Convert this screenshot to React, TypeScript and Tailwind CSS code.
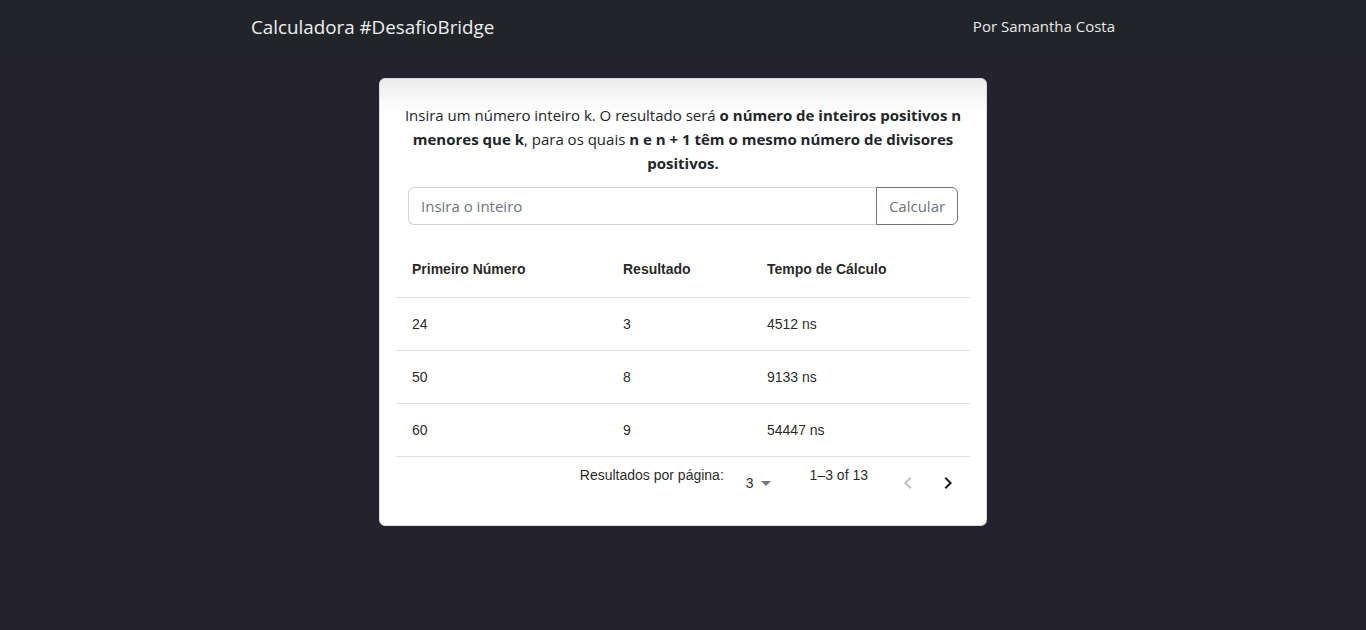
import React from "react";

const sans = "font-['Segoe_UI','Open_Sans','Noto_Sans',sans-serif]";

function ChevronLeft({ className }: { className?: string }) {
  return (
    <svg viewBox="0 0 24 24" width="24" height="24" className={className} fill="currentColor">
      <path d="M15.41 16.59 10.83 12l4.58-4.59L14 6l-6 6 6 6 1.41-1.41z" />
    </svg>
  );
}
function ChevronRight({ className }: { className?: string }) {
  return (
    <svg viewBox="0 0 24 24" width="24" height="24" className={className} fill="currentColor">
      <path d="M8.59 16.59 13.17 12 8.59 7.41 10 6l6 6-6 6-1.41-1.41z" />
    </svg>
  );
}

const rows = [
  { n: "24", r: "3", t: "4512 ns" },
  { n: "50", r: "8", t: "9133 ns" },
  { n: "60", r: "9", t: "54447 ns" },
];

export default function App() {
  return (
    <div className={`min-h-[630px] bg-[#24222e] ${sans}`}>
      <nav className="h-[55px] bg-[#212529] px-[251px] flex items-center justify-between">
        <span className="text-[18.8px] text-[#f0f0f0] leading-[30px] mb-[2px]">Calculadora #DesafioBridge</span>
        <span className="text-[15px] text-[#e8e8e8] mb-[2px]">Por Samantha Costa</span>
      </nav>
      <div className="flex justify-center pt-[23px]">
        <div className="w-[608px] rounded-[6px] border border-[#dcdcdc] bg-[linear-gradient(to_bottom,#ececec,#ffffff_34px)] p-4">
          <p className="mt-2 text-center text-[15px] leading-[24px] text-[#212529]">
            Insira um número inteiro k. O resultado será{" "}
            <b className="font-bold">o número de inteiros positivos n menores que k</b>, para os quais{" "}
            <b className="font-bold">n e n + 1 têm o mesmo número de divisores positivos.</b>
          </p>
          <div className="mx-3 mt-[12px] flex h-[38px]">
            <input
              className="flex-1 min-w-0 rounded-l-[6px] border border-[#ced4da] border-r-0 px-3 text-[15px] text-[#212529] placeholder:text-[#6c757d] outline-none bg-white"
              placeholder="Insira o inteiro"
            />
            <button className="w-[82px] rounded-r-[6px] border border-[#6c757d] text-[15px] text-[#6c757d] bg-white">
              Calcular
            </button>
          </div>
          <div className="mt-[16px] font-['Liberation_Sans',Arial,sans-serif] text-[rgba(0,0,0,0.87)]">
            <table className="w-full border-collapse text-[14px]">
              <thead>
                <tr className="border-b border-[#e0e0e0]">
                  <th className="w-[211px] p-4 text-left font-bold leading-[24px]">Primeiro Número</th>
                  <th className="w-[144px] p-4 text-left font-bold leading-[24px]">Resultado</th>
                  <th className="p-4 text-left font-bold leading-[24px]">Tempo de Cálculo</th>
                </tr>
              </thead>
              <tbody>
                {rows.map((row) => (
                  <tr key={row.n} className="border-b border-[#e0e0e0]">
                    <td className="p-4 leading-[20px]">{row.n}</td>
                    <td className="p-4 leading-[20px]">{row.r}</td>
                    <td className="p-4 leading-[20px]">{row.t}</td>
                  </tr>
                ))}
              </tbody>
            </table>
            <div className="flex h-[52px] items-center justify-end pr-[2px] text-[14px]">
              <p className="mb-4 mr-[14px] leading-[20px]">Resultados por página:</p>
              <div className="relative mr-8 flex h-[24px] items-center pl-2 pr-6 leading-[20px]">
                <span>3</span>
                <svg viewBox="0 0 24 24" width="24" height="24" className="absolute right-0 top-0 text-[rgba(0,0,0,0.54)]" fill="currentColor">
                  <path d="M7 10l5 5 5-5z" />
                </svg>
              </div>
              <p className="mb-4 leading-[20px]">1–3 of 13</p>
              <div className="ml-5 flex">
                <span className="flex h-10 w-10 items-center justify-center text-[rgba(0,0,0,0.26)]">
                  <ChevronLeft />
                </span>
                <span className="flex h-10 w-10 items-center justify-center text-[#1c1c1c]">
                  <ChevronRight />
                </span>
              </div>
            </div>
          </div>
        </div>
      </div>
    </div>
  );
}
